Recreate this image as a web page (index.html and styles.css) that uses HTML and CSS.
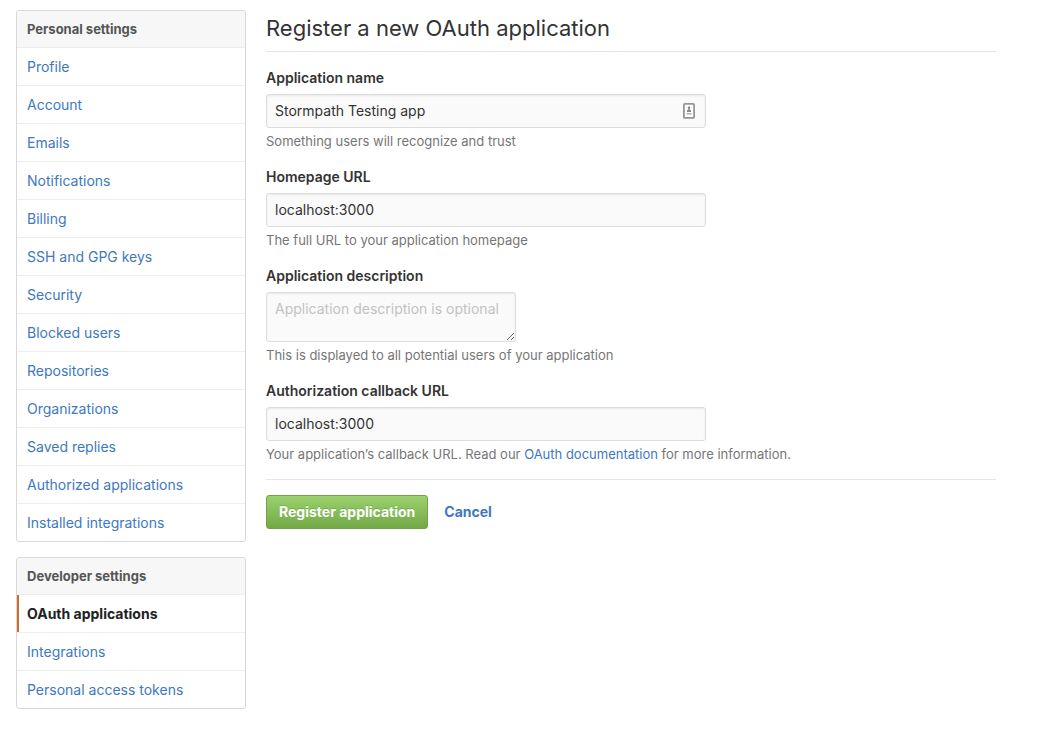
FILE: index.html
```html
<!DOCTYPE html>
<html lang="en">
<head>
<meta charset="utf-8">
<title>Register a new OAuth application</title>
<link rel="stylesheet" href="styles.css">
</head>
<body>
<div class="layout">
  <aside class="sidebar">
    <nav class="menu" aria-labelledby="personal">
      <h2 class="menu-heading" id="personal">Personal settings</h2>
      <a class="menu-item" href="#">Profile</a>
      <a class="menu-item" href="#">Account</a>
      <a class="menu-item" href="#">Emails</a>
      <a class="menu-item" href="#">Notifications</a>
      <a class="menu-item" href="#">Billing</a>
      <a class="menu-item" href="#">SSH and GPG keys</a>
      <a class="menu-item" href="#">Security</a>
      <a class="menu-item" href="#">Blocked users</a>
      <a class="menu-item" href="#">Repositories</a>
      <a class="menu-item" href="#">Organizations</a>
      <a class="menu-item" href="#">Saved replies</a>
      <a class="menu-item" href="#">Authorized applications</a>
      <a class="menu-item" href="#">Installed integrations</a>
    </nav>
    <nav class="menu" aria-labelledby="developer">
      <h2 class="menu-heading" id="developer">Developer settings</h2>
      <a class="menu-item selected" href="#" aria-current="page">OAuth applications</a>
      <a class="menu-item" href="#">Integrations</a>
      <a class="menu-item" href="#">Personal access tokens</a>
    </nav>
  </aside>
  <main class="content">
    <h1 class="title">Register a new OAuth application</h1>
    <form>
      <div class="fields">
        <div class="field">
          <label class="label" for="name">Application name</label>
          <div class="input-wrap">
            <input class="input" id="name" type="text" value="Stormpath Testing app">
            <svg class="autofill" width="12" height="16" viewBox="0 0 12 16" aria-hidden="true">
              <rect x="0.9" y="0.9" width="10.2" height="14" rx="1" fill="#fff" stroke="#969696" stroke-width="1.8"/>
              <circle cx="6" cy="4.6" r="1.2" fill="#808080"/>
              <path d="M5.3 5h1.4v1.4L8 7.2V9H4V7.2l1.300-.8z" fill="#8a8a8a"/>
              <path d="M3.500 10h5v1.600h-5z" fill="#b4b4b4"/>
            </svg>
          </div>
          <p class="note">Something users will recognize and trust</p>
        </div>
        <div class="field">
          <label class="label" for="home">Homepage URL</label>
          <input class="input" id="home" type="text" value="localhost:3000">
          <p class="note">The full URL to your application homepage</p>
        </div>
        <div class="field">
          <label class="label" for="desc">Application description</label>
          <textarea class="input textarea" id="desc" placeholder="Application description is optional"></textarea>
          <p class="note">This is displayed to all potential users of your application</p>
        </div>
        <div class="field">
          <label class="label" for="callback">Authorization callback URL</label>
          <input class="input" id="callback" type="text" value="localhost:3000">
          <p class="note">Your application’s callback URL. Read our <a href="#">OAuth documentation</a> for more information.</p>
        </div>
      </div>
      <div class="actions">
        <button class="button" type="submit">Register application</button>
        <a class="cancel" href="#">Cancel</a>
      </div>
    </form>
  </main>
</div>
</body>
</html>
```
FILE: styles.css
```css
* { box-sizing: border-box; }
body {
  margin: 0;
  background: #fff;
  color: #333;
  font: 14px/20px Inter, "Liberation Sans", sans-serif;
}
a { color: #4078c0; text-decoration: none; }
.layout {
  display: flex;
  gap: 20px;
  padding: 10px 48px 16px 16px;
}
.sidebar {
  display: flex;
  flex: 0 0 230px;
  flex-direction: column;
  gap: 15px;
}
.menu {
  overflow: hidden;
  border: 1px solid #d8d8d8;
  border-radius: 3px;
}
.menu-heading {
  margin: 0;
  padding: 8px 10px;
  background: #f7f7f7;
  color: #555;
  font-size: 13px;
  font-weight: 700;
  line-height: 20px;
}
.menu-item {
  display: block;
  padding: 9px 10px 8px;
  border-top: 1px solid #eee;
}
.menu-item.selected {
  background: linear-gradient(#c9702f, #c9702f) left / 2px 100% no-repeat;
  color: #222;
  font-weight: 700;
}
.content { flex: 1; min-width: 0; }
.title {
  margin: 0 0 16px;
  padding: 3px 0 8px;
  border-bottom: 1px solid #e5e5e5;
  font-size: 22px;
  font-weight: 400;
  line-height: 30px;
}
.fields {
  display: flex;
  flex-direction: column;
  gap: 16px;
}
.label {
  display: block;
  margin-bottom: 6px;
  font-weight: 600;
}
.input-wrap { position: relative; max-width: 440px; }
.input {
  display: block;
  width: 100%;
  max-width: 440px;
  height: 34px;
  padding: 5px 8px 7px;
  border: 1px solid #ddd;
  border-radius: 3px;
  background: #fafafa;
  box-shadow: inset 0 1px 2px rgba(0, 0, 0, 0.075);
  color: #333;
  font: inherit;
}
.textarea {
  width: 250px;
  height: 50px;
  padding-top: 6px;
}
.textarea::placeholder { color: #c2c2c2; }
.autofill { position: absolute; top: 9px; right: 11px; }
.note {
  margin: 3px 0 0;
  color: #767676;
  font-size: 13px;
}
.actions {
  display: flex;
  align-items: center;
  gap: 16px;
  margin-top: 15px;
  padding-top: 15px;
  border-top: 1px solid #e5e5e5;
}
.button {
  height: 34px;
  padding: 6px 12px;
  border: 1px solid #6fa548;
  border-radius: 3px;
  background: linear-gradient(#9bd26d, #72a845);
  color: #fff;
  font: inherit;
  font-weight: 700;
  text-shadow: 0 -1px 0 rgba(0, 0, 0, 0.15);
}
.cancel { font-weight: 700; }
```
